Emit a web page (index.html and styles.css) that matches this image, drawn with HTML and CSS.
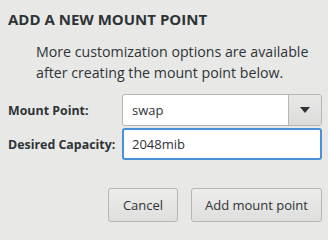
FILE: index.html
```html
<!DOCTYPE html>
<html>
<head>
<meta charset="utf-8">
<link rel="stylesheet" href="styles.css">
</head>
<body>
<div class="dialog">
  <h1 class="title">ADD A NEW MOUNT POINT</h1>
  <p class="info">More customization options are available after creating the mount point below.</p>
  <div class="form">
    <label class="label">Mount Point:</label>
    <div class="combo">
      <div class="combo-text">swap</div>
      <div class="combo-btn">
        <svg width="10" height="6" viewBox="0 0 10 6"><path d="M0 0 L10 0 L5 6 Z" fill="#2e3436"/></svg>
      </div>
    </div>
    <label class="label">Desired Capacity:</label>
    <div class="entry">2048mib</div>
  </div>
  <div class="actions">
    <div class="btn btn-cancel">Cancel</div>
    <div class="btn btn-add">Add mount point</div>
  </div>
</div>
</body>
</html>
```
FILE: styles.css
```css
html, body {
  margin: 0;
  padding: 0;
  background: #e8e8e7;
  overflow: hidden;
}
.dialog {
  width: 328px;
  height: 229px;
  box-sizing: border-box;
  padding: 10px 6px 0 8px;
  font-family: "Open Sans", "Noto Sans", sans-serif;
  color: #2e3436;
}
.title {
  margin: 0;
  font-size: 15px;
  font-weight: 700;
  line-height: 18px;
}
.info {
  margin: 13px 0 0 28px;
  font-size: 14.2px;
  line-height: 21px;
  width: 275px;
}
.form {
  margin-top: 11px;
  display: grid;
  grid-template-columns: 114px 200px;
  row-gap: 2px;
  align-items: center;
}
.label {
  font-weight: 700;
  font-size: 12.4px;
}
.combo {
  display: flex;
  height: 32px;
  box-sizing: border-box;
  border: 1px solid #b6b6b3;
  border-radius: 3px;
  background: #fff;
  overflow: hidden;
}
.combo-text {
  flex: 1;
  padding-left: 9px;
  font-size: 13px;
  line-height: 30px;
}
.combo-btn {
  width: 32px;
  border-left: 1px solid #b6b6b3;
  background: linear-gradient(#e8e8e7, #dcdcdb);
  display: flex;
  align-items: center;
  justify-content: center;
}
.entry {
  height: 32px;
  box-sizing: border-box;
  border: 2px solid #4a90d9;
  border-radius: 3px;
  background: #fff;
  padding-left: 8px;
  font-size: 13px;
  line-height: 28px;
}
.actions {
  margin-top: 28px;
  display: flex;
  justify-content: flex-end;
  gap: 13px;
}
.btn {
  height: 34px;
  box-sizing: border-box;
  border: 1px solid #b6b6b3;
  border-radius: 3px;
  background: linear-gradient(#ededec, #dededd);
  font-size: 13px;
  line-height: 32px;
  text-align: center;
}
.btn-cancel { width: 70px; }
.btn-add { width: 131px; }
```
